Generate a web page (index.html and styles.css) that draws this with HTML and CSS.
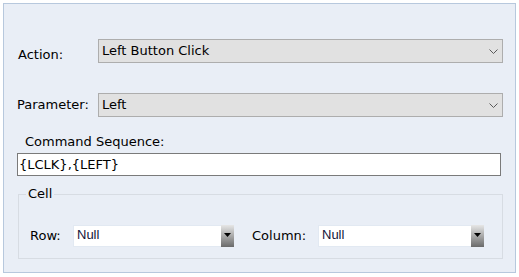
FILE: index.html
```html
<!DOCTYPE html>
<html>
<head>
<meta charset="utf-8">
<link rel="stylesheet" href="styles.css">
</head>
<body>
<div class="panel">
  <div class="row row-action">
    <label class="lbl">Action:</label>
    <div class="select">
      <span>Left Button Click</span>
      <svg class="chev" width="9" height="5" viewBox="0 0 9 5"><polyline points="0.5,0.5 4.5,4.5 8.5,0.5" fill="none" stroke="#5a5a5a" stroke-width="1"/></svg>
    </div>
  </div>
  <div class="row row-param">
    <label class="lbl lbl-param">Parameter:</label>
    <div class="select">
      <span>Left</span>
      <svg class="chev" width="9" height="5" viewBox="0 0 9 5"><polyline points="0.5,0.5 4.5,4.5 8.5,0.5" fill="none" stroke="#5a5a5a" stroke-width="1"/></svg>
    </div>
  </div>
  <div class="cmd-label">Command Sequence:</div>
  <div class="textbox">{LCLK},{LEFT}</div>
  <fieldset class="cell">
    <legend>Cell</legend>
    <div class="cell-row">
      <label class="lbl-row">Row:</label>
      <div class="combo combo-row">
        <span class="combo-text">Null</span>
        <span class="combo-btn"><svg width="7" height="4" viewBox="0 0 7 4"><polygon points="0,0 7,0 3.5,4" fill="#000"/></svg></span>
      </div>
      <label class="lbl-col">Column:</label>
      <div class="combo combo-col">
        <span class="combo-text">Null</span>
        <span class="combo-btn"><svg width="7" height="4" viewBox="0 0 7 4"><polygon points="0,0 7,0 3.5,4" fill="#000"/></svg></span>
      </div>
    </div>
  </fieldset>
</div>
</body>
</html>
```
FILE: styles.css
```css
html, body {
  margin: 0;
  background: #ffffff;
}
body {
  font-family: "DejaVu Sans", Verdana, sans-serif;
  font-size: 13px;
  line-height: 16px;
  color: #000;
}
.panel {
  margin: 3px;
  width: 513px;
  height: 270px;
  box-sizing: border-box;
  border: 1px solid #b7c8dd;
  background: #e9eef6;
  padding: 35px 0 0 14px;
}
.row {
  display: flex;
}
.row-action {
  align-items: flex-end;
}
.row-param {
  margin-top: 30px;
  align-items: center;
}
.lbl {
  width: 80px;
  flex: none;
}
.lbl-param {
  margin-left: -1px;
  width: 81px;
}
.select {
  width: 405px;
  height: 24px;
  box-sizing: border-box;
  border: 1px solid #adadad;
  background: #e1e1e1;
  display: flex;
  align-items: center;
  justify-content: space-between;
  padding: 0 4px 0 3px;
}
.chev {
  display: block;
}
.cmd-label {
  margin: 17px 0 0 7px;
}
.textbox {
  margin: 3px 0 0 -1px;
  width: 484px;
  height: 23px;
  box-sizing: border-box;
  border: 1px solid #7a7a7a;
  background: #fff;
  padding: 0 1px;
  line-height: 21px;
}
.cell {
  margin: 10px 0 0 0;
  width: 485px;
  box-sizing: border-box;
  border: 1px solid #d7dce3;
  padding: 23px 0 11px 11px;
  min-width: 0;
}
.cell legend {
  padding: 0 2px;
  margin-left: -4px;
  line-height: 16px;
}
.cell-row {
  display: flex;
  align-items: center;
}
.lbl-row {
  width: 43px;
  flex: none;
}
.lbl-col {
  width: 66px;
  margin-left: 18px;
  flex: none;
}
.combo {
  height: 22px;
  box-sizing: border-box;
  border: 1px solid #e2e9f2;
  background: #fff;
  display: flex;
  flex: none;
}
.combo-row {
  width: 161px;
}
.combo-col {
  width: 166px;
}
.combo-text {
  flex: 1;
  padding-left: 3px;
  font-family: "Liberation Sans", Arial, sans-serif;
  font-size: 13px;
  line-height: 18px;
  color: #14143a;
}
.combo-btn {
  width: 13px;
  margin: -1px -1px -1px 0;
  background: linear-gradient(#e6e6e6, #6a6a6a);
  display: flex;
  align-items: center;
  justify-content: center;
}
.combo-btn svg {
  display: block;
  margin-top: -2px;
}
```
